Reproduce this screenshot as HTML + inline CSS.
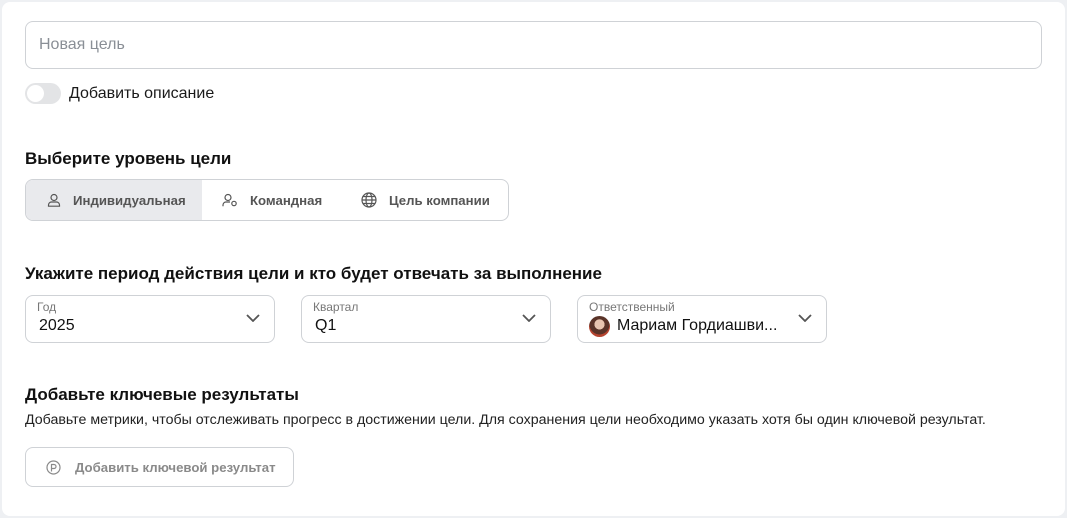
<!DOCTYPE html>
<html><head><meta charset="utf-8"><style>
*{box-sizing:border-box;margin:0;padding:0}
body{width:1067px;height:518px;background:#eef0f3;font-family:"Liberation Sans",Arial,sans-serif;color:#1a1a1a;position:relative;overflow:hidden}
.card{position:absolute;left:2px;top:2px;width:1063px;height:514px;background:#fff;border-radius:8px}
.abs{position:absolute}
.input{left:25px;top:21px;width:1017px;height:48px;border:1px solid #cfd2d6;border-radius:8px;font-size:16px;color:#8a8f96;padding:14px 13px}
.tog{left:25px;top:83px;width:36px;height:21px;border-radius:11px;background:#e3e4e6}
.tog:after{content:"";position:absolute;left:2px;top:2px;width:17px;height:17px;border-radius:50%;background:#fff}
h3{position:absolute;font-size:17px;font-weight:bold;color:#111}
.seg{left:25px;top:179px;width:484px;height:42px;border:1px solid #cfd2d6;border-radius:8px;overflow:hidden}
.seg .it{position:absolute;top:0;height:40px;font-size:13.2px;font-weight:bold;color:#555;display:flex;align-items:center}
.seg svg{margin-right:12px}
.sel{top:295px;height:48px;width:250px;border:1px solid #cfd2d6;border-radius:8px}
.sel .l{position:absolute;left:11px;top:4px;font-size:12px;color:#777}
.sel .v{position:absolute;left:13px;top:21px;font-size:16px;color:#111}
.sel svg{position:absolute;right:14px;top:18px}
.btn{left:25px;top:447px;width:269px;height:40px;border:1px solid #cfd2d6;border-radius:8px;font-size:13.2px;font-weight:bold;color:#8a8a8a;display:flex;align-items:center;padding-left:20px}
</style></head><body>
<div class="card"></div>
<div class="abs input">Новая цель</div>
<div class="abs tog"></div>
<div class="abs" style="left:69px;top:85px;font-size:16px">Добавить описание</div>
<h3 style="left:25px;top:149px">Выберите уровень цели</h3>
<div class="abs seg">
 <div class="it" style="left:0;width:176px;background:#e9eaed;padding-left:21px"><svg width="14" height="14" viewBox="0 0 14 14" fill="none" stroke="#555" stroke-width="1.2"><circle cx="7" cy="4.5" r="3"/><path d="M1.5 13.2v-1.2a3 3 0 0 1 3-3h5a3 3 0 0 1 3 3v1.2z"/></svg>Индивидуальная</div>
 <div class="it" style="left:196px"><svg width="16" height="14" viewBox="0 0 16 14" fill="none" stroke="#555" stroke-width="1.2"><circle cx="6" cy="4.5" r="3"/><path d="M1 13.2v-1.2a3 3 0 0 1 3-3h4"/><circle cx="12" cy="10.5" r="2.2"/></svg>Командная</div>
 <div class="it" style="left:335px"><svg width="16" height="16" viewBox="0 0 16 16" fill="none" stroke="#555" stroke-width="1.2"><circle cx="8" cy="8" r="7"/><ellipse cx="8" cy="8" rx="3" ry="7"/><path d="M1 8h14M2 4.5h12M2 11.5h12"/></svg>Цель компании</div>
</div>
<h3 style="left:25px;top:264px">Укажите период действия цели и кто будет отвечать за выполнение</h3>
<div class="abs sel" style="left:25px"><div class="l">Год</div><div class="v">2025</div><svg width="14" height="8" viewBox="0 0 14 8" fill="none" stroke="#555" stroke-width="1.8"><path d="M1 1l6 6 6-6"/></svg></div>
<div class="abs sel" style="left:301px"><div class="l">Квартал</div><div class="v">Q1</div><svg width="14" height="8" viewBox="0 0 14 8" fill="none" stroke="#555" stroke-width="1.8"><path d="M1 1l6 6 6-6"/></svg></div>
<div class="abs sel" style="left:577px"><div class="l">Ответственный</div><div class="abs" style="left:11px;top:20px;width:21px;height:21px;border-radius:50%;background:radial-gradient(circle at 50% 40%,#e8c4b0 0 30%,#5a3328 32% 60%,#b5442f 62%)"></div><div class="v" style="left:39px">Мариам Гордиашви...</div><svg width="14" height="8" viewBox="0 0 14 8" fill="none" stroke="#555" stroke-width="1.8"><path d="M1 1l6 6 6-6"/></svg></div>
<h3 style="left:25px;top:385px">Добавьте ключевые результаты</h3>
<div class="abs" style="left:25px;top:412px;font-size:14.2px;color:#222">Добавьте метрики, чтобы отслеживать прогресс в достижении цели. Для сохранения цели необходимо указать хотя бы один ключевой результат.</div>
<div class="abs btn"><svg width="15" height="15" viewBox="0 0 15 15" fill="none" stroke="#8a8a8a" stroke-width="1.2" style="margin-right:14px"><circle cx="7.5" cy="7.5" r="6.5"/><path d="M5.5 11.5v-7h2.5a2 2 0 0 1 0 4h-2.5"/></svg>Добавить ключевой результат</div>
</body></html>
